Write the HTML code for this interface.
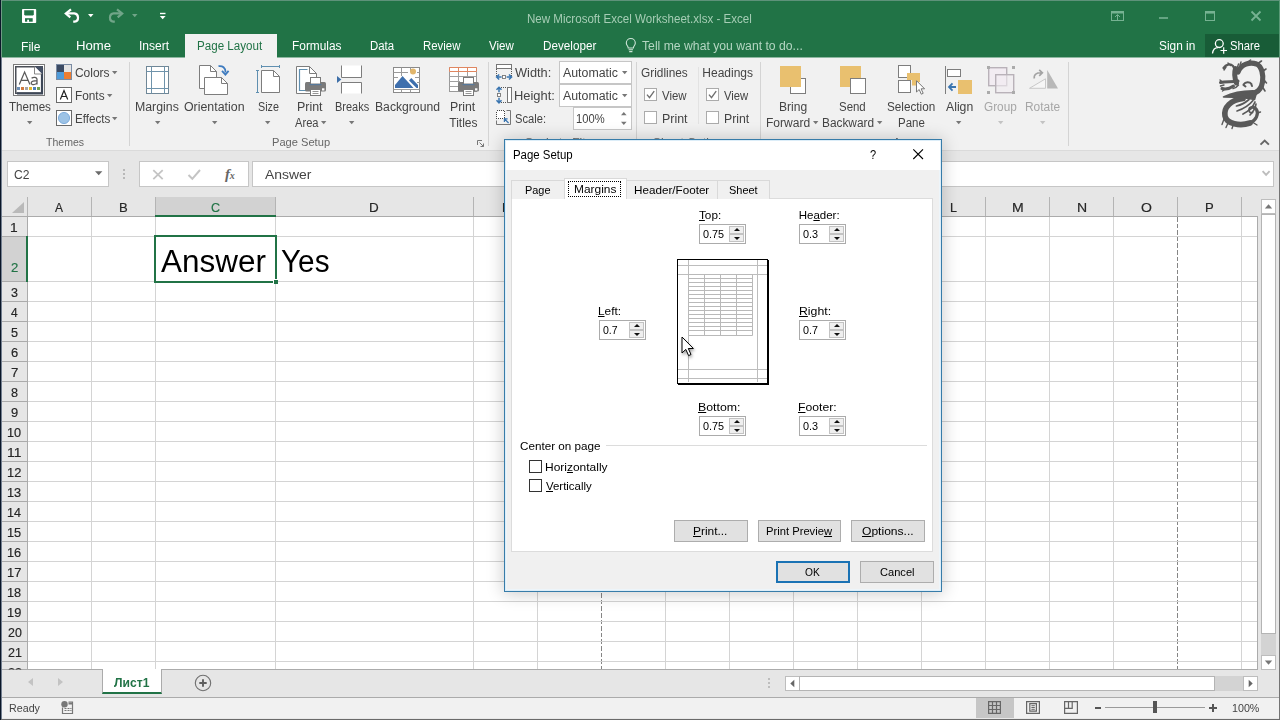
<!DOCTYPE html>
<html lang="en"><head><meta charset="utf-8"><title>New Microsoft Excel Worksheet.xlsx - Excel</title>
<style>
*{box-sizing:border-box;margin:0;padding:0}
html,body{width:1280px;height:720px;overflow:hidden}
body{position:relative;background:#e6e6e6;font-family:"Liberation Sans",sans-serif;font-size:12px;color:#444}
.a{position:absolute}
.t{position:absolute;white-space:nowrap;line-height:1;transform-origin:0 0}
.t u{text-decoration:underline;text-underline-offset:1px}
svg{position:absolute;overflow:visible}
#edgeL{left:0;top:0;width:2px;height:720px;background:linear-gradient(to right,#0a1628 0,#0a1628 1px,#737f90 1px,#737f90 2px)}
#edgeL2{left:1px;top:0;width:1px;height:57px;background:#6f9a84}
#green{left:2px;top:0;width:1277px;height:57px;background:#217346}
#topline{left:2px;top:0;width:1277px;height:1px;background:#5e927a}
#edgeR{left:1279px;top:0;width:1px;height:720px;background:linear-gradient(to bottom,#5a9a77 0,#5a9a77 57px,#747474 57px,#747474 100%)}
#activetab{left:185px;top:34px;width:92px;height:24px;background:#f1f1f1}
#share{left:1205px;top:34px;width:74px;height:23px;background:#185c37}
#ribbon{left:2px;top:57px;width:1277px;height:93px;background:#f1f1f1}
#ribbonline{left:2px;top:150px;width:1277px;height:1px;background:#dadada}
.vsep{position:absolute;top:62px;width:1px;height:84px;background:#d4d4d4}
.box{position:absolute;background:#fff;border:1px solid #c6c6c6}
.cb{position:absolute;width:13px;height:13px;background:#fff;border:1px solid #ababab}
.arr{position:absolute;width:0;height:0;border-left:2.5px solid transparent;border-right:2.5px solid transparent;border-top:3px solid #777}
/* grid */
#gridwrap{left:2px;top:197px;width:1256px;height:473px;background:#fff;overflow:hidden}
#colhead{left:0;top:0;width:1256px;height:19px;background:#e6e6e6}
#colheadline{left:0;top:19px;width:1256px;height:1px;background:#ababab}
#rowhead{left:0;top:20px;width:25px;height:453px;background:#e6e6e6;border-right:1px solid #ababab}
.gv{position:absolute;top:20px;width:1px;height:453px;background:#d4d4d4}
.gh{position:absolute;left:26px;width:1230px;height:1px;background:#d4d4d4}
.rh{position:absolute;left:0;width:25px;height:1px;background:#ababab}
.chs{position:absolute;top:4px;width:1px;height:16px;background:#ababab}
.dash{position:absolute;top:20px;width:1px;height:453px;background:repeating-linear-gradient(to bottom,#8c8c8c 0,#8c8c8c 4px,transparent 4px,transparent 6px)}
#gridR{left:1257px;top:216px;width:1px;height:454px;background:#ababab}
#sheetbar{left:2px;top:670px;width:1277px;height:27px;background:#e6e6e6}
#status{left:2px;top:697px;width:1277px;height:21px;background:#f1f1f1;border-top:1px solid #ababab}
#bot1{left:2px;top:718px;width:1277px;height:1px;background:#e8e8e8}
#bot2{left:1px;top:719px;width:1279px;height:1px;background:#6a6a6a}
/* dialog */
#dlg{left:504px;top:139px;width:438px;height:453px;background:#f0f0f0;border:1px solid #377ca9;box-shadow:0 1px 16px 1px rgba(0,0,0,.2),inset 0 0 0 1px #dcedf8,inset 0 0 0 2px #edf5fa;z-index:10}
#dlgtitle{left:1px;top:1px;width:434px;height:29px;background:#fff}
#texts{position:absolute;left:0;top:0;width:1280px;height:720px;will-change:transform}
#texts2{position:absolute;left:0;top:0;width:1280px;height:720px;z-index:20;will-change:transform}
.tab{position:absolute;background:#f0f0f0;border:1px solid #d9d9d9;border-bottom:none}
#tabpage{left:6px;top:58px;width:422px;height:354px;background:#fff;border:1px solid #dcdcdc}
.btn{position:absolute;height:22px;background:#e1e1e1;border:1px solid #adadad}
.spin{position:absolute;width:47px;height:20px;background:#fff;border:1px solid #ababab}
.spin i{position:absolute;left:29px;width:15px;height:8px;background:#efefef;border:1px solid #c3c3c3}
.spin i.u{top:1px}.spin i.d{top:9px}
.spin i:after{content:"";position:absolute;left:3.5px;width:0;height:0;border-left:3px solid transparent;border-right:3px solid transparent}
.spin i.u:after{top:1.3px;border-bottom:3.2px solid #111}
.spin i.d:after{top:1.7px;border-top:3.2px solid #111}

</style></head><body>
<div class="a" id="green"></div><div class="a" id="topline"></div>
<div class="a" id="activetab"></div><div class="a" id="share"></div>
<div class="a" id="ribbon"></div><div class="a" id="ribbonline"></div>
<div class="vsep" style="left:129px"></div>
<div class="vsep" style="left:488px"></div>
<div class="vsep" style="left:636px"></div>
<div class="vsep" style="left:760px"></div>
<div class="vsep" style="left:1068px"></div>
<div class="a" style="left:698px;top:67px;width:1px;height:57px;background:#e2e2e2"></div>
<div class="box" style="left:559px;top:61px;width:73px;height:23px"></div>
<div class="box" style="left:559px;top:84px;width:73px;height:23px"></div>
<div class="box" style="left:573px;top:107px;width:59px;height:23px"></div>
<div class="cb" style="left:644px;top:88px"></div>
<svg style="left:644px;top:88px" width="13" height="13"><path d="M3 6.600 L5.500 9.600 L10.200 3.200" fill="none" stroke="#707070" stroke-width="1.4"/></svg>
<div class="cb" style="left:644px;top:111px"></div>
<div class="cb" style="left:706px;top:88px"></div>
<svg style="left:706px;top:88px" width="13" height="13"><path d="M3 6.600 L5.500 9.600 L10.200 3.200" fill="none" stroke="#707070" stroke-width="1.4"/></svg>
<div class="cb" style="left:706px;top:111px"></div>
<svg style="left:27px;top:121px" width="6" height="4"><path d="M0 0H5.4L2.7 3.3Z" fill="#777"/></svg>
<svg style="left:112px;top:71.3px" width="6" height="4"><path d="M0 0H5.4L2.7 3.3Z" fill="#777"/></svg>
<svg style="left:107px;top:94.3px" width="6" height="4"><path d="M0 0H5.4L2.7 3.3Z" fill="#777"/></svg>
<svg style="left:112px;top:117.3px" width="6" height="4"><path d="M0 0H5.4L2.7 3.3Z" fill="#777"/></svg>
<svg style="left:155px;top:121px" width="6" height="4"><path d="M0 0H5.4L2.7 3.3Z" fill="#777"/></svg>
<svg style="left:212px;top:121px" width="6" height="4"><path d="M0 0H5.4L2.7 3.3Z" fill="#777"/></svg>
<svg style="left:265.3px;top:121px" width="6" height="4"><path d="M0 0H5.4L2.7 3.3Z" fill="#777"/></svg>
<svg style="left:321.3px;top:121px" width="6" height="4"><path d="M0 0H5.4L2.7 3.3Z" fill="#777"/></svg>
<svg style="left:349.3px;top:121px" width="6" height="4"><path d="M0 0H5.4L2.7 3.3Z" fill="#777"/></svg>
<svg style="left:813.3px;top:121px" width="6" height="4"><path d="M0 0H5.4L2.7 3.3Z" fill="#777"/></svg>
<svg style="left:877px;top:121px" width="6" height="4"><path d="M0 0H5.4L2.7 3.3Z" fill="#777"/></svg>
<svg style="left:956px;top:121px" width="6" height="4"><path d="M0 0H5.4L2.7 3.3Z" fill="#777"/></svg>
<svg style="left:622px;top:71.3px" width="6" height="4"><path d="M0 0H5.4L2.7 3.3Z" fill="#777"/></svg>
<svg style="left:622px;top:94.3px" width="6" height="4"><path d="M0 0H5.4L2.7 3.3Z" fill="#777"/></svg>
<svg style="left:998px;top:121px" width="6" height="4"><path d="M0 0H5.4L2.7 3.3Z" fill="#c3c3c3"/></svg>
<svg style="left:1040px;top:121px" width="6" height="4"><path d="M0 0H5.4L2.7 3.3Z" fill="#c3c3c3"/></svg>
<svg style="left:620.8px;top:112px" width="6" height="14"><path d="M0 3.300 H5.600 L2.800 0Z M0 9.800 H5.600 L2.800 13Z" fill="#777"/></svg>
<div class="box" style="left:7px;top:161px;width:102px;height:26px"></div>
<div class="box" style="left:139px;top:161px;width:110px;height:26px"></div>
<div class="box" style="left:252px;top:161px;width:1022px;height:26px"></div>
<svg style="left:95px;top:171px" width="8" height="5"><path d="M0 .3H7.4L3.7 4.3Z" fill="#6a6a6a"/></svg>
<div class="a" style="left:123px;top:169px;width:2px;height:2px;background:#b8b8b8;"></div>
<div class="a" style="left:123px;top:173px;width:2px;height:2px;background:#b8b8b8;"></div>
<div class="a" style="left:123px;top:177px;width:2px;height:2px;background:#b8b8b8;"></div>
<div class="a" style="left:2px;top:197px;width:1256px;height:20px;background:#e6e6e6;"></div>
<div class="a" style="left:2px;top:217px;width:1256px;height:452px;background:#fff;"></div>
<div class="a" style="left:2px;top:217px;width:25px;height:452px;background:#e6e6e6;"></div>
<div class="a" style="left:27px;top:217px;width:1px;height:452px;background:#d4d4d4;"></div>
<div class="a" style="left:91px;top:217px;width:1px;height:452px;background:#d4d4d4;"></div>
<div class="a" style="left:155px;top:217px;width:1px;height:452px;background:#d4d4d4;"></div>
<div class="a" style="left:275px;top:217px;width:1px;height:452px;background:#d4d4d4;"></div>
<div class="a" style="left:473px;top:217px;width:1px;height:452px;background:#d4d4d4;"></div>
<div class="a" style="left:537px;top:217px;width:1px;height:452px;background:#d4d4d4;"></div>
<div class="a" style="left:665px;top:217px;width:1px;height:452px;background:#d4d4d4;"></div>
<div class="a" style="left:729px;top:217px;width:1px;height:452px;background:#d4d4d4;"></div>
<div class="a" style="left:793px;top:217px;width:1px;height:452px;background:#d4d4d4;"></div>
<div class="a" style="left:857px;top:217px;width:1px;height:452px;background:#d4d4d4;"></div>
<div class="a" style="left:921px;top:217px;width:1px;height:452px;background:#d4d4d4;"></div>
<div class="a" style="left:985px;top:217px;width:1px;height:452px;background:#d4d4d4;"></div>
<div class="a" style="left:1049px;top:217px;width:1px;height:452px;background:#d4d4d4;"></div>
<div class="a" style="left:1113px;top:217px;width:1px;height:452px;background:#d4d4d4;"></div>
<div class="a" style="left:1241px;top:217px;width:1px;height:452px;background:#d4d4d4;"></div>
<div class="a" style="left:601px;top:217px;width:1px;height:452px;background:repeating-linear-gradient(to bottom,#858585 0,#858585 4.7px,#fff 4.7px,#fff 6.6px)"></div>
<div class="a" style="left:1177px;top:217px;width:1px;height:452px;background:repeating-linear-gradient(to bottom,#858585 0,#858585 4.7px,#fff 4.7px,#fff 6.6px)"></div>
<div class="a" style="left:27px;top:197px;width:1px;height:19px;background:#b4b4b4;"></div>
<div class="a" style="left:91px;top:197px;width:1px;height:19px;background:#b4b4b4;"></div>
<div class="a" style="left:155px;top:197px;width:1px;height:19px;background:#b4b4b4;"></div>
<div class="a" style="left:275px;top:197px;width:1px;height:19px;background:#b4b4b4;"></div>
<div class="a" style="left:473px;top:197px;width:1px;height:19px;background:#b4b4b4;"></div>
<div class="a" style="left:537px;top:197px;width:1px;height:19px;background:#b4b4b4;"></div>
<div class="a" style="left:601px;top:197px;width:1px;height:19px;background:#b4b4b4;"></div>
<div class="a" style="left:665px;top:197px;width:1px;height:19px;background:#b4b4b4;"></div>
<div class="a" style="left:729px;top:197px;width:1px;height:19px;background:#b4b4b4;"></div>
<div class="a" style="left:793px;top:197px;width:1px;height:19px;background:#b4b4b4;"></div>
<div class="a" style="left:857px;top:197px;width:1px;height:19px;background:#b4b4b4;"></div>
<div class="a" style="left:921px;top:197px;width:1px;height:19px;background:#b4b4b4;"></div>
<div class="a" style="left:985px;top:197px;width:1px;height:19px;background:#b4b4b4;"></div>
<div class="a" style="left:1049px;top:197px;width:1px;height:19px;background:#b4b4b4;"></div>
<div class="a" style="left:1113px;top:197px;width:1px;height:19px;background:#b4b4b4;"></div>
<div class="a" style="left:1177px;top:197px;width:1px;height:19px;background:#b4b4b4;"></div>
<div class="a" style="left:1241px;top:197px;width:1px;height:19px;background:#b4b4b4;"></div>
<div class="a" style="left:28px;top:236px;width:1230px;height:1px;background:#d4d4d4;"></div>
<div class="a" style="left:2px;top:236px;width:25px;height:1px;background:#ababab;"></div>
<div class="a" style="left:28px;top:281px;width:1230px;height:1px;background:#d4d4d4;"></div>
<div class="a" style="left:2px;top:281px;width:25px;height:1px;background:#ababab;"></div>
<div class="a" style="left:28px;top:301px;width:1230px;height:1px;background:#d4d4d4;"></div>
<div class="a" style="left:2px;top:301px;width:25px;height:1px;background:#ababab;"></div>
<div class="a" style="left:28px;top:321px;width:1230px;height:1px;background:#d4d4d4;"></div>
<div class="a" style="left:2px;top:321px;width:25px;height:1px;background:#ababab;"></div>
<div class="a" style="left:28px;top:341px;width:1230px;height:1px;background:#d4d4d4;"></div>
<div class="a" style="left:2px;top:341px;width:25px;height:1px;background:#ababab;"></div>
<div class="a" style="left:28px;top:361px;width:1230px;height:1px;background:#d4d4d4;"></div>
<div class="a" style="left:2px;top:361px;width:25px;height:1px;background:#ababab;"></div>
<div class="a" style="left:28px;top:381px;width:1230px;height:1px;background:#d4d4d4;"></div>
<div class="a" style="left:2px;top:381px;width:25px;height:1px;background:#ababab;"></div>
<div class="a" style="left:28px;top:401px;width:1230px;height:1px;background:#d4d4d4;"></div>
<div class="a" style="left:2px;top:401px;width:25px;height:1px;background:#ababab;"></div>
<div class="a" style="left:28px;top:421px;width:1230px;height:1px;background:#d4d4d4;"></div>
<div class="a" style="left:2px;top:421px;width:25px;height:1px;background:#ababab;"></div>
<div class="a" style="left:28px;top:441px;width:1230px;height:1px;background:#d4d4d4;"></div>
<div class="a" style="left:2px;top:441px;width:25px;height:1px;background:#ababab;"></div>
<div class="a" style="left:28px;top:461px;width:1230px;height:1px;background:#d4d4d4;"></div>
<div class="a" style="left:2px;top:461px;width:25px;height:1px;background:#ababab;"></div>
<div class="a" style="left:28px;top:481px;width:1230px;height:1px;background:#d4d4d4;"></div>
<div class="a" style="left:2px;top:481px;width:25px;height:1px;background:#ababab;"></div>
<div class="a" style="left:28px;top:501px;width:1230px;height:1px;background:#d4d4d4;"></div>
<div class="a" style="left:2px;top:501px;width:25px;height:1px;background:#ababab;"></div>
<div class="a" style="left:28px;top:521px;width:1230px;height:1px;background:#d4d4d4;"></div>
<div class="a" style="left:2px;top:521px;width:25px;height:1px;background:#ababab;"></div>
<div class="a" style="left:28px;top:541px;width:1230px;height:1px;background:#d4d4d4;"></div>
<div class="a" style="left:2px;top:541px;width:25px;height:1px;background:#ababab;"></div>
<div class="a" style="left:28px;top:561px;width:1230px;height:1px;background:#d4d4d4;"></div>
<div class="a" style="left:2px;top:561px;width:25px;height:1px;background:#ababab;"></div>
<div class="a" style="left:28px;top:581px;width:1230px;height:1px;background:#d4d4d4;"></div>
<div class="a" style="left:2px;top:581px;width:25px;height:1px;background:#ababab;"></div>
<div class="a" style="left:28px;top:601px;width:1230px;height:1px;background:#d4d4d4;"></div>
<div class="a" style="left:2px;top:601px;width:25px;height:1px;background:#ababab;"></div>
<div class="a" style="left:28px;top:621px;width:1230px;height:1px;background:#d4d4d4;"></div>
<div class="a" style="left:2px;top:621px;width:25px;height:1px;background:#ababab;"></div>
<div class="a" style="left:28px;top:641px;width:1230px;height:1px;background:#d4d4d4;"></div>
<div class="a" style="left:2px;top:641px;width:25px;height:1px;background:#ababab;"></div>
<div class="a" style="left:28px;top:661px;width:1230px;height:1px;background:#d4d4d4;"></div>
<div class="a" style="left:2px;top:661px;width:25px;height:1px;background:#ababab;"></div>
<div class="a" style="left:2px;top:216px;width:1256px;height:1px;background:#ababab;"></div>
<div class="a" style="left:27px;top:217px;width:1px;height:452px;background:#ababab;"></div>
<div class="a" style="left:1257px;top:216px;width:1px;height:453px;background:#ababab;"></div>
<div class="a" style="left:156px;top:197px;width:119px;height:18px;background:#d2d2d2;"></div>
<div class="a" style="left:155px;top:215px;width:121px;height:2px;background:#217346;"></div>
<div class="a" style="left:2px;top:237px;width:24px;height:44px;background:#d2d2d2;"></div>
<div class="a" style="left:26px;top:236px;width:2px;height:46px;background:#217346;"></div>
<div class="a" style="left:1258px;top:197px;width:4px;height:472px;background:#e6e6e6;"></div>
<svg style="left:12px;top:202px" width="12" height="11"><path d="M12 0 V11 H0 Z" fill="#b9b9b9"/></svg>
<div class="a" style="left:154px;top:235px;width:123px;height:48px;border:2px solid #217346"></div>
<div class="a" style="left:273px;top:279px;width:5px;height:5px;background:#217346;border-left:1px solid #fff;border-top:1px solid #fff;box-sizing:content-box;width:4px;height:4px"></div>
<div class="a" style="left:1261px;top:197px;width:15px;height:473px;background:#e6e6e6;"></div>
<div class="a" style="left:1261px;top:213px;width:15px;height:443px;background:#d3d3d3;"></div>
<div class="box" style="left:1261px;top:199px;width:15px;height:15px;border-color:#bdbdbd"></div>
<div class="box" style="left:1261px;top:214px;width:15px;height:420px;border-color:#b4b4b4"></div>
<svg style="left:1261px;top:199px" width="15" height="15"><path d="M3.800 9.500 L7.500 5.300 L11.200 9.500Z" fill="#777"/></svg>
<div class="a" id="sheetbar"></div><div class="a" id="status"></div>
<div class="a" style="left:2px;top:669px;width:1256px;height:1px;background:#ababab;"></div>
<div class="box" style="left:1261px;top:655px;width:15px;height:15px;border-color:#bdbdbd"></div><svg style="left:1261px;top:655px" width="15" height="15"><path d="M3.800 5.500 L7.500 9.700 L11.200 5.500Z" fill="#777"/></svg>
<div class="a" style="left:102px;top:669px;width:60px;height:25px;background:#fff;border-bottom:2px solid #217346;border-left:1px solid #ababab;border-right:1px solid #ababab"></div>
<svg style="left:28px;top:678px" width="40" height="9"><path d="M5 0 V8 L0 4Z M30 0 V8 L35 4Z" fill="#c3c3c3"/></svg>
<svg style="left:193px;top:673px" width="20" height="20"><circle cx="10" cy="10" r="7.7" fill="none" stroke="#707070" stroke-width="1.1"/><path d="M6.300 10 H13.700 M10 6.300 V13.700" stroke="#5e5e5e" stroke-width="1.9"/></svg>
<div class="a" style="left:785px;top:676px;width:473px;height:15px;background:#d3d3d3;"></div>
<div class="box" style="left:785px;top:676px;width:15px;height:15px;border-color:#bdbdbd"></div>
<div class="box" style="left:799px;top:676px;width:416px;height:15px;border-color:#b4b4b4"></div>
<div class="box" style="left:1243px;top:676px;width:15px;height:15px;border-color:#bdbdbd"></div>
<svg style="left:785px;top:676px" width="15" height="15"><path d="M9.300 3.800 L5.300 7.500 L9.300 11.200Z" fill="#666"/></svg>
<svg style="left:1243px;top:676px" width="15" height="15"><path d="M5.700 3.800 L9.700 7.500 L5.700 11.200Z" fill="#666"/></svg>
<div class="a" style="left:768px;top:678px;width:2px;height:2px;background:#bdbdbd;"></div>
<div class="a" style="left:768px;top:682px;width:2px;height:2px;background:#bdbdbd;"></div>
<div class="a" style="left:768px;top:686px;width:2px;height:2px;background:#bdbdbd;"></div>
<div class="a" style="left:976px;top:698px;width:38px;height:20px;background:#c6c6c6;"></div>
<svg style="left:988px;top:701px" width="13" height="13"><path d="M.6 .6H12.4V12.4H.6Z M4.5 .5V12.5 M8.5 .5V12.5 M.5 4.5H12.5 M.5 8.5H12.5" fill="none" stroke="#666" stroke-width="1.2"/></svg>
<svg style="left:1026px;top:701px" width="15" height="13"><path d="M.6 .6H13.4V12.4H.6Z M3.8 2.7H10.4V10.2H3.8Z" fill="none" stroke="#666" stroke-width="1.2"/><path d="M5.4 4.7H8.8 M5.4 6.5H8.8 M5.4 8.3H8.8" fill="none" stroke="#666" stroke-width="1"/></svg>
<svg style="left:1064px;top:701px" width="15" height="13"><path d="M.6 .6H13.4V12.4H.6Z M4.5 .6V7.4 M8.2 .6V7.4H.6" fill="none" stroke="#666" stroke-width="1.2"/></svg>
<div class="a" style="left:1095px;top:707px;width:6px;height:2px;background:#555;"></div>
<div class="a" style="left:1105px;top:707px;width:100px;height:1px;background:#9a9a9a;"></div>
<div class="a" style="left:1153px;top:701px;width:4px;height:12px;background:#555;"></div>
<div class="a" style="left:1209px;top:707px;width:8px;height:2px;background:#555;"></div>
<div class="a" style="left:1212px;top:704px;width:2px;height:8px;background:#555;"></div>
<svg style="left:61px;top:701px" width="13" height="13"><circle cx="3.5" cy="3.2" r="3.2" fill="#777"/><path d="M1.5 6.5V12.5H11.5V1H7.5" fill="none" stroke="#777" stroke-width="1.2"/><path d="M7.5 1.5H11.5V3.5H7.5Z" fill="#777"/><path d="M3.5 7.5H5.5M6.5 7.5H8.5M9.3 7.5H10.5M3.5 9.5H5.5M6.5 9.5H8.5M9.3 9.5H10.5" stroke="#777" stroke-width="1"/></svg>
<div class="a" id="edgeL"></div><div class="a" id="edgeL2"></div><div class="a" id="edgeR"></div><div class="a" id="bot1"></div><div class="a" id="bot2"></div>
<svg style="left:0;top:0" width="1280" height="160" viewBox="0 0 1280 160">
<!-- QAT -->
<rect x="2" y="57" width="183" height="1" fill="#8db7a0"/><rect x="277" y="57" width="1002" height="1" fill="#8db7a0"/>
<rect x="22" y="9" width="14.2" height="14" rx=".8" fill="#fff"/>
<path d="M24.2 10.3 H33.8 V14.6 L33 15.5 H25 L24.2 14.6Z" fill="#217346"/>
<rect x="25" y="18.2" width="7.7" height="3.5" fill="#217346"/><rect x="27.2" y="19.7" width="1.8" height="2.2" fill="#fff"/>
<path d="M71 9.3 L65.8 13.5 L70.3 17.4" fill="none" stroke="#fff" stroke-width="2.2"/>
<path d="M66.5 13.4 H74.3 A4.2 4.2 0 0 1 74.6 21.7 L73.2 21.7" fill="none" stroke="#fff" stroke-width="2.2"/>
<path d="M88 14 H93.5 L90.75 17.2Z" fill="#fff"/>
<g opacity=".36"><path d="M117 9.3 L122.2 13.500 L117.700 17.400" fill="none" stroke="#fff" stroke-width="2.2"/>
<path d="M121.500 13.400 H113.700 A4.2 4.2 0 0 0 113.400 21.700 L114.800 21.700" fill="none" stroke="#fff" stroke-width="2.2"/>
<path d="M132 14 H137.500 L134.750 17.2Z" fill="#fff"/></g>
<path d="M160 13.5H165.5" stroke="#fff" stroke-width="1.4"/><path d="M159.8 16 H165.6 L162.7 19.3Z" fill="#fff"/>
<!-- lightbulb -->
<path d="M628.2 48 C628.2 46 626.3 45.5 626.3 43 A4.5 4.5 0 0 1 635.3 43 C635.3 45.5 633.4 46 633.4 48 Z M628.6 49.8H633 M629.2 51.6H632.4" fill="none" stroke="#cfe5d8" stroke-width="1.1"/>
<!-- window controls -->
<g fill="none" stroke="#76b292" stroke-width="1">
<rect x="1111.5" y="11.5" width="12" height="9"/><path d="M1111 12.5H1124" stroke-width="2"/><path d="M1117.5 20V15 M1115 17 L1117.5 14.5 L1120 17" />
<path d="M1159 18H1168" stroke-width="1.6"/>
<rect x="1205.5" y="11.5" width="9" height="9"/><path d="M1205 12.5H1215" stroke-width="2.2"/>
<path d="M1251.5 11.5 L1260.5 20.5 M1260.5 11.5 L1251.5 20.5" stroke-width="1.8"/>
</g>
<!-- share person -->
<g fill="none" stroke="#fff" stroke-width="1.3"><circle cx="1219.3" cy="43.6" r="3.9"/><path d="M1212.5 53.5 C1213 49.5 1215.5 47.6 1218 47.6"/><path d="M1220.5 50.5H1227 M1223.7 47.3V53.8" stroke-width="1.2"/></g>

<!-- Themes icon -->
<rect x="13.5" y="64.5" width="31" height="31" fill="#fff" stroke="#7a7a7a"/>
<rect x="15.75" y="66.75" width="26.5" height="26.5" fill="#fff" stroke="#4b4f57" stroke-width="1.5"/>
<path d="M42 68 V93.3 H17" fill="none" stroke="#3c4656" stroke-width="2.2"/>
<path d="M34.5 66.5 H42.5 V74.5 Z" fill="#465166"/><path d="M34.5 66.5 V74 H42" fill="#fff" stroke="#6a6a6a" stroke-width=".8"/>
<g fill="none" stroke="#5a5a5a" stroke-width="1.25"><path d="M19.3 84.6 L24.6 72 L29.9 84.6 M21.2 80.4H28"/><path d="M31.6 78.3 C33 76.9 37 76.7 37 79.6 V84.6 M37 80.6 C33.5 80.6 31.2 81 31.2 82.9 C31.2 85.3 35.6 85.2 37 82.8"/></g>
<rect x="17" y="87" width="3" height="3" fill="#6d8fb5"/><rect x="21" y="87" width="3" height="3" fill="#d2793c"/><rect x="25" y="87" width="3" height="3" fill="#a5a5a5"/><rect x="29" y="87" width="3" height="3" fill="#e3b82c"/><rect x="33" y="87" width="3" height="3" fill="#4f81bd"/><rect x="37" y="87" width="3" height="3" fill="#70a04f"/>
<!-- Colors / Fonts / Effects -->
<rect x="56" y="64" width="16" height="16" fill="#7a8ba3"/>
<rect x="57" y="65" width="7" height="7" fill="#3b4a63"/><rect x="64" y="65" width="7" height="7" fill="#e4e4e4"/><rect x="57" y="72" width="7" height="7" fill="#4f9bd9"/><rect x="64" y="72" width="7" height="7" fill="#ed7d31"/>
<rect x="56.5" y="87.5" width="15" height="15" fill="#fff" stroke="#6a6a6a"/>
<path d="M60.3 99.5 L64 90.5 L67.7 99.5 M61.6 96.5H66.4" fill="none" stroke="#222" stroke-width="1.2"/>
<rect x="56.5" y="110.5" width="15" height="15" fill="#fff" stroke="#6a6a6a"/>
<circle cx="64" cy="118" r="5.6" fill="#9dc3e6" stroke="#6c9fd6" stroke-width=".8"/>
<!-- Margins -->
<rect x="146.5" y="66.5" width="22" height="27" fill="#fff" stroke="#6f8797"/>
<path d="M151.5 66.5V93.5 M164.5 66.5V93.5 M146.5 71.5H168.5 M146.5 88.5H168.5" stroke="#6f93ab" fill="none"/>
<!-- Orientation -->
<path d="M199.5 65.5 H210.5 L216.5 71.5 V88.5 H199.5 Z" fill="#fff" stroke="#7d7d7d"/><path d="M210.5 65.5 V71.5 H216.5" fill="none" stroke="#7d7d7d"/>
<path d="M204.5 77.5 H221.5 L227.5 83.5 V94.5 H204.5 Z" fill="#fff" stroke="#7d7d7d"/><path d="M221.5 77.5 V83.5 H227.5" fill="none" stroke="#7d7d7d"/>
<path d="M218.5 66.2 C222.5 65.6 225.6 67.6 225.6 72.6" fill="none" stroke="#3e7bbf" stroke-width="1.8"/><path d="M222 70.8 L225.4 74.6 L228.6 70.8" fill="none" stroke="#3e7bbf" stroke-width="1.8"/>
<!-- Size -->
<path d="M261.5 70.5 H273.5 L279.5 76.5 V92.5 H261.5 Z" fill="#fff" stroke="#7d7d7d"/><path d="M273.5 70.5 V76.5 H279.5" fill="none" stroke="#7d7d7d"/>
<path d="M261 66.5H280 M261.5 65V68 M279.5 65V68 M257.5 70V93 M256 70.5H259 M256 92.5H259" fill="none" stroke="#5f8fb0"/>
<!-- Print Area -->
<path d="M296.5 66.5 H309.5 L316.5 73.5 V93.5 H296.5 Z" fill="#fff" stroke="#7d7d7d"/><path d="M309.5 66.5 V73.5 H316.5" fill="none" stroke="#7d7d7d"/>
<path d="M307.5 69.5 H299.5 V90.5 H307.5" fill="none" stroke="#5f8fb0" stroke-width="1.2"/>
<g><rect x="305" y="82" width="21" height="9.5" rx="1.5" fill="#7a7a7a"/><rect x="310.5" y="77.5" width="10" height="6.5" fill="#fff" stroke="#7a7a7a"/><path d="M309.5 84.6H321.5" stroke="#56789a" stroke-width="1.2"/><rect x="310.5" y="89.5" width="10" height="6" fill="#fff" stroke="#7a7a7a"/><path d="M312.5 91.5H318.5 M312.5 93.5H318.5" stroke="#8a8a8a" stroke-width=".9"/><rect x="322" y="88.3" width="2.4" height="2.2" fill="#fff"/></g>
<!-- Breaks -->
<path d="M341.5 65.5 V77.5 H361.5 V65.5" fill="#fff" stroke="#7d7d7d"/><path d="M341.5 93.5 V82.5 H361.5 V93.5" fill="#fff" stroke="#7d7d7d"/>
<path d="M337 76 L341.3 79.5 L337 83Z" fill="#3e6fa8"/>
<!-- Background -->
<rect x="393.5" y="67.5" width="26" height="25" fill="#fff" stroke="#8a8a8a"/>
<path d="M401.5 67.5V76 M410.5 67.5V72 M393.5 72.5H408 M417 72.5H419.5 M393.5 77.5H398 M415 77.5H419.5 M393.5 89.5H419.5 M401.5 89.5V92.5 M410.5 89.5V92.5 M417 82.5 H419.5" stroke="#9a9a9a" fill="none"/>
<path d="M395 88 V85 L402.5 76 L413.5 88Z" fill="#3e6fad"/><path d="M409 80.5 L411.3 78 L418 85 V88 H416.5Z" fill="#3e6fad"/>
<circle cx="413" cy="71.6" r="3" fill="#e2b66b"/>
<!-- Print Titles -->
<rect x="449.5" y="67.5" width="27" height="24" fill="#fff" stroke="#9a9a9a"/>
<path d="M449.5 76.5H476.5 M449.5 81.5H460 M449.5 86.5H460 M458.5 71.5V91.5 M467.5 71.5V78" stroke="#a0a0a0" fill="none"/>
<path d="M449.5 71.5 V67.5 H476.5 V71.5 Z M458.5 67.5V71.5 M467.5 67.5V71.5" stroke="#e08660" fill="#fff"/>
<g transform="translate(153,0)"><rect x="305" y="82" width="21" height="9.5" rx="1.5" fill="#7a7a7a"/><rect x="310.5" y="77.5" width="10" height="6.5" fill="#fff" stroke="#7a7a7a"/><path d="M309.5 84.6H321.5" stroke="#56789a" stroke-width="1.2"/><rect x="310.5" y="89.5" width="10" height="6" fill="#fff" stroke="#7a7a7a"/><path d="M312.5 91.5H318.5 M312.5 93.5H318.5" stroke="#8a8a8a" stroke-width=".9"/><rect x="322" y="88.3" width="2.4" height="2.2" fill="#fff"/></g>
<!-- dialog launcher -->
<path d="M477.5 145 V140.5 H482 M479.5 142.5 L483.5 146.5 M483.5 143.5 V146.5 H480.5" fill="none" stroke="#777" stroke-width="1"/>
<!-- Width icon -->
<rect x="496.5" y="64.5" width="15" height="4" fill="#fff" stroke="#777"/>
<path d="M496.5 69V76 M511.5 69V76" stroke="#555" stroke-dasharray="1 1" shape-rendering="crispEdges"/>
<rect x="502.5" y="75.5" width="3" height="3" fill="#fff" stroke="#777" stroke-width=".9"/>
<path d="M496.6 77 H501.6 M499.2 74.5 L496.6 77 L499.2 79.5 M506.6 77 H511.6 M509 74.5 L511.6 77 L509 79.5" fill="none" stroke="#3a75b0" stroke-width="1.5"/>
<!-- Height icon -->
<rect x="507.5" y="87.5" width="4" height="15" fill="#fff" stroke="#777"/>
<path d="M501 87.5H507 M501 102.5H507" stroke="#555" stroke-dasharray="1 1" shape-rendering="crispEdges"/>
<rect x="497.5" y="93.5" width="3" height="3" fill="#fff" stroke="#777" stroke-width=".9"/>
<path d="M499 87.3 V92.3 M496.5 89.8 L499 87.3 L501.5 89.8 M499 97.8 V102.8 M496.5 100.2 L499 102.8 L501.5 100.2" fill="none" stroke="#3a75b0" stroke-width="1.5"/>
<!-- Scale icon -->
<rect x="496.5" y="110.5" width="8" height="8" fill="#fff" stroke="#444" stroke-dasharray="1 1" shape-rendering="crispEdges"/>
<path d="M506.5 110.5 H510.5 V124.5 H496.5 V120.5" fill="none" stroke="#777"/>
<path d="M508.6 123 L504.6 119 M504.4 122 V118.8 H507.6" fill="none" stroke="#3a75b0" stroke-width="1.2"/>
<!-- Bring Forward -->
<rect x="790.5" y="78.5" width="15" height="15" fill="#fff" stroke="#7d7d7d"/><rect x="780" y="66" width="21" height="21" fill="#e9c06f"/>
<!-- Send Backward -->
<rect x="840" y="66" width="21" height="21" fill="#e9c06f"/><rect x="850.5" y="78.5" width="15" height="15" fill="#fff" stroke="#7d7d7d"/>
<!-- Selection Pane -->
<rect x="898.5" y="65.5" width="12" height="12" fill="#fff" stroke="#7d7d7d"/><rect x="898.5" y="80.5" width="12" height="12" fill="#fff" stroke="#7d7d7d"/>
<path d="M907 73 H920 V82 H917 V85.5 H912 V80 H907Z" fill="#e9c06f"/>
<path d="M916.5 80.7 V92 L919.2 89.5 L921.3 94.2 L923.2 93.3 L921.1 88.8 H924.6 Z" fill="#fff" stroke="#777" stroke-width="1"/>
<!-- Align -->
<path d="M945.5 66V94" stroke="#7d7d7d"/><rect x="947.5" y="69.5" width="13" height="7" fill="#fff" stroke="#7d7d7d"/><rect x="958" y="80" width="14" height="14" fill="#e9c06f"/>
<path d="M949 87 H956 M952.5 83.4 L949 87 L952.5 90.6" fill="none" stroke="#3a75b0" stroke-width="1.8"/>
<!-- Group -->
<rect x="988.7" y="67.7" width="18" height="18" fill="#f2ecf2" stroke="#b9b2b9" stroke-width="1.4"/><rect x="995.7" y="74.7" width="18" height="18" fill="#f2ecf2" fill-opacity=".6" stroke="#b9b2b9" stroke-width="1.4"/>
<g fill="#ababab"><rect x="987" y="66" width="3" height="3"/><rect x="1012" y="66" width="3" height="3"/><rect x="987" y="91" width="3" height="3"/><rect x="1012" y="91" width="3" height="3"/></g>
<!-- Rotate -->
<path d="M1047.2 70 V88.5 H1058Z" fill="#b8b8b8"/><path d="M1045.5 78.8 V88.3 H1029.5Z" fill="#f6f6f6" stroke="#c9c9c9"/>
<path d="M1034.3 78.5 C1033.6 74.5 1036.5 72.6 1041.5 72.8 M1039.2 69.8 L1042.4 72.8 L1039.2 75.8" fill="none" stroke="#a3a3a3" stroke-width="1.6"/>
<!-- collapse caret -->
<path d="M1260.500 144.700 L1264.700 140.500 L1268.900 144.700" fill="none" stroke="#666" stroke-width="1.900"/>
<!-- dragon -->
<g fill="none" stroke="#595959" stroke-linecap="round" stroke-linejoin="round">
<path d="M1238 72 C1241 64 1250 61.5 1256.5 64 C1262 66.5 1263.500 75 1262.500 82 C1261.500 88 1259 91 1255.500 92.500" stroke-width="5.2"/>
<path d="M1235.500 68.500 C1234 73 1235 79 1236.500 83" stroke-width="5"/>
<path d="M1220.500 82.500 C1226 81 1232 82.500 1238 81 M1222 88.500 C1226 89.500 1230 88.500 1233.500 86" stroke-width="3"/>
<path d="M1220 80 L1223 82.500 M1220.500 86 L1224 85 M1222.500 91 L1225.500 89 M1233 88.500 C1235 88 1237 87 1238.500 85" stroke-width="1.4"/>
<path d="M1223.500 68 C1226 64.500 1230 63 1233 66 C1234.500 68 1235 70 1235 72" stroke-width="2.2"/>
<path d="M1224 70 L1226 67 M1228 63 L1230.500 65.500 M1238.500 64 L1237.500 67 M1241 62 L1240 65" stroke-width="1.4"/>
<path d="M1243.500 84.500 C1245.500 81.500 1249.500 81.500 1251.500 84 M1245.500 86.500 L1243.500 85 M1252 86 L1251 83.500" stroke-width="2"/>
<path d="M1248 62 L1250.500 60 M1257 64 L1261.500 61 M1263 71 L1266 69 M1264 80 L1266.500 83 M1262.500 87 L1265 91" stroke-width="1.6"/>
<path d="M1257 91 C1247 90.500 1234 92 1223.500 97 C1234 97 1246 97.500 1254.500 99.500Z" fill="#595959" stroke-width="1.6"/>
<path d="M1243 98.500 C1231 100 1223.500 107 1225 116 C1226.500 124 1240 126.500 1250 123" stroke-width="5.600"/>
<path d="M1250 123 C1256 120.500 1259 114 1256.500 109.500 C1255 107 1252 106.500 1250 108.500" stroke-width="3.200"/>
<path d="M1250 108.500 C1248 110.500 1249.500 113.500 1252.500 112.500" stroke-width="1.8"/>
<path d="M1253 100.500 C1249 105.500 1243 109 1237 111 M1255 102 C1253 107 1248 111.500 1243 114 M1249 99.500 C1245 103 1241 105 1236.500 106 M1256 104 C1255.500 108 1253 112 1250 115" stroke-width="1.7"/>
<path d="M1224 119 L1222 124.500 M1228 123 L1226 127.500 M1233 125.500 L1232 128.500 M1253 122.500 L1257 125 M1257.500 113 L1260.500 112" stroke-width="1.4"/>
</g>
</svg>
<!-- formula bar icons -->
<svg style="left:0;top:160px" width="1280" height="30" viewBox="0 160 1280 30">
<path d="M153.3 170.2 L162.7 179.2 M162.7 170.2 L153.3 179.2" stroke="#c4c4c4" stroke-width="1.8" fill="none"/>
<path d="M188.5 175 L192.3 178.8 L200 170" stroke="#c4c4c4" stroke-width="2" fill="none"/>
<path d="M1262.600 171.200 L1266.100 174.800 L1269.600 171.200" fill="none" stroke="#bdbdbd" stroke-width="1.900"/>
</svg>
<span class="t" style="left:225px;top:166.5px;font-size:15px;color:#666;font-family:'Liberation Serif',serif;font-style:italic;font-weight:bold;letter-spacing:-.3px">f<span style="font-size:10px">x</span></span>

<div id="texts">
<span class="t" style="left:526.57px;top:13.00px;font-size:12px;color:#a6cdb5;transform:scaleX(0.964);">New Microsoft Excel Worksheet.xlsx - Excel</span>
<span class="t" style="left:21.03px;top:41.00px;font-size:12px;color:#fff;transform:scaleX(1.007);">File</span>
<span class="t" style="left:76.45px;top:40.00px;font-size:12px;color:#fff;transform:scaleX(1.097);">Home</span>
<span class="t" style="left:138.91px;top:40.00px;font-size:12px;color:#fff;transform:scaleX(1.005);">Insert</span>
<span class="t" style="left:197.37px;top:40.00px;font-size:12px;color:#217346;transform:scaleX(0.967);">Page Layout</span>
<span class="t" style="left:291.55px;top:40.00px;font-size:12px;color:#fff;transform:scaleX(0.991);">Formulas</span>
<span class="t" style="left:369.59px;top:40.00px;font-size:12px;color:#fff;transform:scaleX(0.952);">Data</span>
<span class="t" style="left:422.59px;top:40.00px;font-size:12px;color:#fff;transform:scaleX(0.951);">Review</span>
<span class="t" style="left:488.94px;top:40.00px;font-size:12px;color:#fff;transform:scaleX(0.960);">View</span>
<span class="t" style="left:542.56px;top:40.00px;font-size:12px;color:#fff;transform:scaleX(0.974);">Developer</span>
<span class="t" style="left:642.26px;top:40.00px;font-size:12px;color:#b4d6c2;transform:scaleX(1.017);">Tell me what you want to do...</span>
<span class="t" style="left:1158.97px;top:40.00px;font-size:12px;color:#fff;transform:scaleX(0.989);">Sign in</span>
<span class="t" style="left:1230.49px;top:40.00px;font-size:12px;color:#fff;transform:scaleX(0.937);">Share</span>
<span class="t" style="left:8.57px;top:101.00px;font-size:12px;color:#444;transform:scaleX(0.966);">Themes</span>
<span class="t" style="left:74.90px;top:67.00px;font-size:12px;color:#444;">Colors</span>
<span class="t" style="left:74.55px;top:90.00px;font-size:12px;color:#444;transform:scaleX(0.985);">Fonts</span>
<span class="t" style="left:74.57px;top:113.00px;font-size:12px;color:#444;transform:scaleX(0.969);">Effects</span>
<span class="t" style="left:46.09px;top:137.00px;font-size:11.5px;color:#666;transform:scaleX(0.915);">Themes</span>
<span class="t" style="left:135.31px;top:101.00px;font-size:12px;color:#444;transform:scaleX(1.027);">Margins</span>
<span class="t" style="left:183.94px;top:101.00px;font-size:12px;color:#444;transform:scaleX(1.031);">Orientation</span>
<span class="t" style="left:257.52px;top:101.00px;font-size:12px;color:#444;transform:scaleX(0.896);">Size</span>
<span class="t" style="left:296.51px;top:101.00px;font-size:12px;color:#444;transform:scaleX(1.036);">Print</span>
<span class="t" style="left:294.50px;top:117.00px;font-size:12px;color:#444;transform:scaleX(0.928);">Area</span>
<span class="t" style="left:334.92px;top:101.00px;font-size:12px;color:#444;transform:scaleX(0.915);">Breaks</span>
<span class="t" style="left:374.53px;top:101.00px;font-size:12px;color:#444;transform:scaleX(1.014);">Background</span>
<span class="t" style="left:449.82px;top:101.00px;font-size:12px;color:#444;transform:scaleX(1.024);">Print</span>
<span class="t" style="left:449.26px;top:117.00px;font-size:12px;color:#444;">Titles</span>
<span class="t" style="left:271.61px;top:137.00px;font-size:11.5px;color:#666;transform:scaleX(0.966);">Page Setup</span>
<span class="t" style="left:514.94px;top:67.00px;font-size:12px;color:#444;transform:scaleX(1.064);">Width:</span>
<span class="t" style="left:513.97px;top:90.00px;font-size:12px;color:#444;transform:scaleX(1.075);">Height:</span>
<span class="t" style="left:514.50px;top:113.00px;font-size:12px;color:#444;transform:scaleX(0.929);">Scale:</span>
<span class="t" style="left:562.50px;top:67.00px;font-size:12px;color:#444;transform:scaleX(1.028);">Automatic</span>
<span class="t" style="left:562.50px;top:90.00px;font-size:12px;color:#444;transform:scaleX(1.028);">Automatic</span>
<span class="t" style="left:575.96px;top:113.00px;font-size:12px;color:#444;transform:scaleX(0.932);">100%</span>
<span class="t" style="left:525.45px;top:137.00px;font-size:11.5px;color:#666;transform:scaleX(1.054);">Scale to Fit</span>
<span class="t" style="left:653.47px;top:137.00px;font-size:11.5px;color:#666;transform:scaleX(1.028);">Sheet Options</span>
<span class="t" style="left:893.00px;top:137.00px;font-size:11.5px;color:#666;transform:scaleX(1.014);">Arrange</span>
<span class="t" style="left:640.71px;top:67.00px;font-size:12px;color:#444;transform:scaleX(0.987);">Gridlines</span>
<span class="t" style="left:662.44px;top:90.00px;font-size:12px;color:#444;transform:scaleX(0.952);">View</span>
<span class="t" style="left:661.51px;top:113.00px;font-size:12px;color:#444;transform:scaleX(1.036);">Print</span>
<span class="t" style="left:702.34px;top:67.00px;font-size:12px;color:#444;">Headings</span>
<span class="t" style="left:724.44px;top:90.00px;font-size:12px;color:#444;transform:scaleX(0.940);">View</span>
<span class="t" style="left:723.52px;top:113.00px;font-size:12px;color:#444;transform:scaleX(1.024);">Print</span>
<span class="t" style="left:778.53px;top:101.00px;font-size:12px;color:#444;transform:scaleX(1.006);">Bring</span>
<span class="t" style="left:766.04px;top:117.00px;font-size:12px;color:#444;transform:scaleX(1.005);">Forward</span>
<span class="t" style="left:839.49px;top:101.00px;font-size:12px;color:#444;transform:scaleX(0.953);">Send</span>
<span class="t" style="left:822.35px;top:117.00px;font-size:12px;color:#444;transform:scaleX(0.988);">Backward</span>
<span class="t" style="left:886.97px;top:101.00px;font-size:12px;color:#444;transform:scaleX(0.977);">Selection</span>
<span class="t" style="left:897.88px;top:117.00px;font-size:12px;color:#444;transform:scaleX(0.956);">Pane</span>
<span class="t" style="left:945.50px;top:101.00px;font-size:12px;color:#444;transform:scaleX(1.020);">Align</span>
<span class="t" style="left:983.91px;top:101.00px;font-size:12px;color:#a6a6a6;transform:scaleX(0.982);">Group</span>
<span class="t" style="left:1025.35px;top:101.00px;font-size:12px;color:#a6a6a6;transform:scaleX(0.994);">Rotate</span>
<span class="t" style="left:13.90px;top:168.00px;font-size:13px;color:#444;transform:scaleX(0.930);">C2</span>
<span class="t" style="left:264.50px;top:168.00px;font-size:13px;color:#444;transform:scaleX(1.070);">Answer</span>
<span class="t" style="left:55.27px;top:201.00px;font-size:13px;color:#262626;transform:scaleX(0.920);-webkit-text-stroke:.18px;">A</span>
<span class="t" style="left:118.95px;top:201.00px;font-size:13px;color:#262626;transform:scaleX(1.006);-webkit-text-stroke:.18px;">B</span>
<span class="t" style="left:368.92px;top:201.00px;font-size:13px;color:#262626;transform:scaleX(1.034);-webkit-text-stroke:.18px;">D</span>
<span class="t" style="left:1011.77px;top:201.00px;font-size:13px;color:#262626;transform:scaleX(1.080);-webkit-text-stroke:.18px;">M</span>
<span class="t" style="left:1076.80px;top:201.00px;font-size:13px;color:#262626;transform:scaleX(1.080);-webkit-text-stroke:.18px;">N</span>
<span class="t" style="left:1140.76px;top:201.00px;font-size:13px;color:#262626;transform:scaleX(1.080);-webkit-text-stroke:.18px;">O</span>
<span class="t" style="left:1205.15px;top:201.00px;font-size:13px;color:#262626;transform:scaleX(1.006);-webkit-text-stroke:.18px;">P</span>
<span class="t" style="left:950.39px;top:201.00px;font-size:13px;color:#262626;transform:scaleX(0.968);-webkit-text-stroke:.18px;">L</span>
<span class="t" style="left:211.37px;top:201.00px;font-size:13px;color:#217346;transform:scaleX(0.969);-webkit-text-stroke:.18px;">C</span>
<span class="t" style="left:502.27px;top:201.00px;font-size:13px;color:#262626;transform:scaleX(0.988);-webkit-text-stroke:.18px;">E</span>
<span class="t" style="left:10.47px;top:221.00px;font-size:13px;color:#262626;transform:scaleX(1.061);-webkit-text-stroke:.18px;">1</span>
<span class="t" style="left:10.84px;top:261.00px;font-size:13px;color:#217346;transform:scaleX(1.014);-webkit-text-stroke:.18px;">2</span>
<span class="t" style="left:11.06px;top:286.00px;font-size:13px;color:#262626;transform:scaleX(0.962);-webkit-text-stroke:.18px;">3</span>
<span class="t" style="left:11.21px;top:306.00px;font-size:13px;color:#262626;transform:scaleX(0.920);-webkit-text-stroke:.18px;">4</span>
<span class="t" style="left:10.99px;top:326.00px;font-size:13px;color:#262626;transform:scaleX(0.972);-webkit-text-stroke:.18px;">5</span>
<span class="t" style="left:10.85px;top:346.00px;font-size:13px;color:#262626;transform:scaleX(0.993);-webkit-text-stroke:.18px;">6</span>
<span class="t" style="left:10.84px;top:366.00px;font-size:13px;color:#262626;transform:scaleX(1.014);-webkit-text-stroke:.18px;">7</span>
<span class="t" style="left:10.99px;top:386.00px;font-size:13px;color:#262626;transform:scaleX(0.972);-webkit-text-stroke:.18px;">8</span>
<span class="t" style="left:10.92px;top:406.00px;font-size:13px;color:#262626;transform:scaleX(0.993);-webkit-text-stroke:.18px;">9</span>
<span class="t" style="left:7.35px;top:426.00px;font-size:13px;color:#262626;transform:scaleX(0.977);-webkit-text-stroke:.18px;">10</span>
<span class="t" style="left:7.26px;top:446.00px;font-size:13px;color:#262626;transform:scaleX(1.068);-webkit-text-stroke:.18px;">11</span>
<span class="t" style="left:7.33px;top:466.00px;font-size:13px;color:#262626;transform:scaleX(0.992);-webkit-text-stroke:.18px;">12</span>
<span class="t" style="left:7.34px;top:486.00px;font-size:13px;color:#262626;transform:scaleX(0.982);-webkit-text-stroke:.18px;">13</span>
<span class="t" style="left:7.36px;top:506.00px;font-size:13px;color:#262626;transform:scaleX(0.967);-webkit-text-stroke:.18px;">14</span>
<span class="t" style="left:7.34px;top:526.00px;font-size:13px;color:#262626;transform:scaleX(0.982);-webkit-text-stroke:.18px;">15</span>
<span class="t" style="left:7.34px;top:546.00px;font-size:13px;color:#262626;transform:scaleX(0.982);-webkit-text-stroke:.18px;">16</span>
<span class="t" style="left:7.33px;top:566.00px;font-size:13px;color:#262626;transform:scaleX(0.992);-webkit-text-stroke:.18px;">17</span>
<span class="t" style="left:7.34px;top:586.00px;font-size:13px;color:#262626;transform:scaleX(0.982);-webkit-text-stroke:.18px;">18</span>
<span class="t" style="left:7.34px;top:606.00px;font-size:13px;color:#262626;transform:scaleX(0.987);-webkit-text-stroke:.18px;">19</span>
<span class="t" style="left:7.68px;top:626.00px;font-size:13px;color:#262626;transform:scaleX(0.953);-webkit-text-stroke:.18px;">20</span>
<span class="t" style="left:7.67px;top:646.00px;font-size:13px;color:#262626;transform:scaleX(0.962);-webkit-text-stroke:.18px;">21</span>
<span class="t" style="left:7.67px;top:666.00px;font-size:13px;color:#262626;transform:scaleX(0.967);-webkit-text-stroke:.18px;clip-path:inset(0 0 9.5px 0);">22</span>
<span class="t" style="left:161.30px;top:246.00px;font-size:31px;color:#000;transform:scaleX(1.015);">Answer</span>
<span class="t" style="left:280.91px;top:246.00px;font-size:31px;color:#000;transform:scaleX(0.959);">Yes</span>
<span class="t" style="left:114.24px;top:676.00px;font-size:13px;color:#217346;transform:scaleX(0.933);font-weight:bold;">Лист1</span>
<span class="t" style="left:8.84px;top:703.00px;font-size:11.5px;color:#444;transform:scaleX(0.931);">Ready</span>
<span class="t" style="left:1231.70px;top:703.00px;font-size:11.5px;color:#444;transform:scaleX(0.930);">100%</span>
</div>
<div class="a" id="dlg">
<div class="a" id="dlgtitle"></div>
<svg style="left:408px;top:9px" width="11" height="11"><path d="M.3 .3 L10 10 M10 .3 L.3 10" stroke="#000" stroke-width="1.1" fill="none"/></svg>
<div class="a" id="tabpage"></div>
<div class="tab" style="left:6px;top:40px;width:54px;height:19px"></div>
<div class="tab" style="left:121px;top:40px;width:92px;height:19px"></div>
<div class="tab" style="left:212px;top:40px;width:53px;height:19px"></div>
<div class="tab" style="left:59px;top:38px;width:63px;height:21px;background:#fff"></div>
<div class="a" style="left:63px;top:41px;width:53px;height:16px;border:1px dotted #000"></div>
<div class="spin" style="left:194px;top:84px"><i class="u"></i><i class="d"></i></div>
<div class="spin" style="left:294px;top:84px"><i class="u"></i><i class="d"></i></div>
<div class="spin" style="left:94px;top:180px"><i class="u"></i><i class="d"></i></div>
<div class="spin" style="left:294px;top:180px"><i class="u"></i><i class="d"></i></div>
<div class="spin" style="left:194px;top:276px"><i class="u"></i><i class="d"></i></div>
<div class="spin" style="left:294px;top:276px"><i class="u"></i><i class="d"></i></div>
<div class="a" style="left:101px;top:305px;width:321px;height:1px;background:#dcdcdc"></div>
<div class="cb" style="left:24px;top:320px;border-color:#333"></div>
<div class="cb" style="left:24px;top:339px;border-color:#333"></div>
<div class="btn" style="left:169px;top:380px;width:74px"></div>
<div class="btn" style="left:253px;top:380px;width:83px"></div>
<div class="btn" style="left:346px;top:380px;width:74px"></div>
<div class="btn" style="left:271px;top:421px;width:74px;border:2px solid #1a72b4"></div>
<div class="btn" style="left:355px;top:421px;width:74px"></div>
<!-- preview -->
<div class="a" style="left:172px;top:119px;width:91px;height:125px;background:#fff;border:1px solid #000;box-shadow:1px 1px 0 #000"></div>
<svg style="left:172px;top:119px" width="92" height="126">
<path d="M11.5 1V123 M80.500 1V123 M1 6.5H90 M1 15.5H90 M1 110.5H90 M1 119.5H90" stroke="#bdbdbd" fill="none"/>
<path d="M11.5 15.5H75.5V76.5H11.5Z M27.5 15.5V76.5 M43.5 15.5V76.5 M59.5 15.5V76.5 M11.5 19.5H75.5 M11.5 23.5H75.5 M11.5 27.5H75.5 M11.5 31.5H75.5 M11.5 35.5H75.5 M11.5 39.5H75.5 M11.5 43.5H75.5 M11.5 47.5H75.5 M11.5 51.5H75.5 M11.5 55.5H75.5 M11.5 59.5H75.5 M11.5 63.5H75.5 M11.5 67.5H75.5 M11.5 71.5H75.5" stroke="#b9b9b9" fill="none"/>
</svg>
<!-- cursor -->
<svg style="left:176px;top:196px;filter:drop-shadow(1px 2px 1.5px rgba(0,0,0,.35))" width="14" height="21"><path d="M1 1 V17 L4.8 13.4 L7.6 19.6 L10 18.5 L7.3 12.5 H12.4 Z" fill="#fff" stroke="#000" stroke-width="1" stroke-linejoin="miter"/></svg>
</div>

<div id="texts2">
<span class="t" style="left:512.59px;top:149.00px;font-size:12px;color:#000;transform:scaleX(0.952);z-index:20;">Page Setup</span>
<span class="t" style="left:525.43px;top:185.00px;font-size:11.5px;color:#000;transform:scaleX(0.950);z-index:20;">Page</span>
<span class="t" style="left:573.55px;top:184.00px;font-size:11.5px;color:#000;transform:scaleX(1.036);z-index:20;">Margins</span>
<span class="t" style="left:633.57px;top:185.00px;font-size:11.5px;color:#000;transform:scaleX(1.015);z-index:20;">Header/Footer</span>
<span class="t" style="left:729.01px;top:185.00px;font-size:11.5px;color:#000;transform:scaleX(0.951);z-index:20;">Sheet</span>
<span class="t" style="left:699.17px;top:210.00px;font-size:11.5px;color:#000;transform:scaleX(1.021);z-index:20;"><u>T</u>op:</span>
<span class="t" style="left:798.68px;top:210.00px;font-size:11.5px;color:#000;z-index:20;">He<u>a</u>der:</span>
<span class="t" style="left:598.26px;top:306.00px;font-size:11.5px;color:#000;transform:scaleX(1.026);z-index:20;"><u>L</u>eft:</span>
<span class="t" style="left:798.62px;top:306.00px;font-size:11.5px;color:#000;transform:scaleX(1.067);z-index:20;"><u>R</u>ight:</span>
<span class="t" style="left:698.41px;top:402.00px;font-size:11.5px;color:#000;transform:scaleX(1.071);z-index:20;"><u>B</u>ottom:</span>
<span class="t" style="left:798.22px;top:402.00px;font-size:11.5px;color:#000;transform:scaleX(1.061);z-index:20;"><u>F</u>ooter:</span>
<span class="t" style="left:702.87px;top:229.00px;font-size:11.5px;color:#000;transform:scaleX(0.942);z-index:20;">0.75</span>
<span class="t" style="left:802.87px;top:229.00px;font-size:11.5px;color:#000;transform:scaleX(0.943);z-index:20;">0.3</span>
<span class="t" style="left:603.18px;top:325.00px;font-size:11.5px;color:#000;transform:scaleX(0.916);z-index:20;">0.7</span>
<span class="t" style="left:802.87px;top:325.00px;font-size:11.5px;color:#000;transform:scaleX(0.936);z-index:20;">0.7</span>
<span class="t" style="left:702.87px;top:421.00px;font-size:11.5px;color:#000;transform:scaleX(0.942);z-index:20;">0.75</span>
<span class="t" style="left:802.87px;top:421.00px;font-size:11.5px;color:#000;transform:scaleX(0.943);z-index:20;">0.3</span>
<span class="t" style="left:519.82px;top:441.00px;font-size:11.5px;color:#000;transform:scaleX(1.016);z-index:20;">Center on page</span>
<span class="t" style="left:545.44px;top:462.00px;font-size:11.5px;color:#000;transform:scaleX(1.041);z-index:20;">Hori<u>z</u>ontally</span>
<span class="t" style="left:546.34px;top:481.00px;font-size:11.5px;color:#000;transform:scaleX(0.993);z-index:20;"><u>V</u>ertically</span>
<span class="t" style="left:693.35px;top:526.00px;font-size:11.5px;color:#000;transform:scaleX(1.036);z-index:20;"><u>P</u>rint...</span>
<span class="t" style="left:765.90px;top:526.00px;font-size:11.5px;color:#000;transform:scaleX(0.975);z-index:20;">Print Previe<u>w</u></span>
<span class="t" style="left:861.96px;top:526.00px;font-size:11.5px;color:#000;transform:scaleX(1.049);z-index:20;"><u>O</u>ptions...</span>
<span class="t" style="left:805.34px;top:567.00px;font-size:11.5px;color:#000;transform:scaleX(0.888);z-index:20;">OK</span>
<span class="t" style="left:879.95px;top:567.00px;font-size:11.5px;color:#000;transform:scaleX(0.964);z-index:20;">Cancel</span>
<span class="t" style="left:870.16px;top:149.00px;font-size:12px;color:#000;transform:scaleX(0.920);z-index:20;">?</span>
</div>
</body></html>
